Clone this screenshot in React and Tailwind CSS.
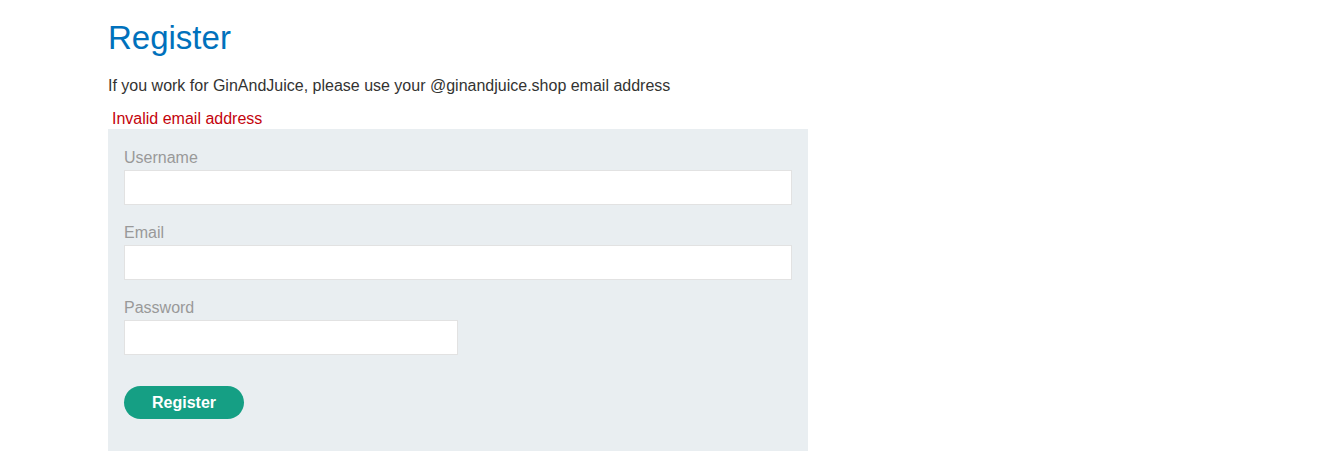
import React from 'react';

export default function App() {
  return (
    <div className="min-h-screen bg-white font-['Liberation_Sans',Arial,sans-serif] text-[#333332]">
      <div className="ml-[108px] w-[700px]">
        <h1 className="pt-[18px] text-[33px] leading-[40px] text-[#0071bc]">Register</h1>
        <p className="mt-[16px] text-[16px] leading-[24px]">
          If you work for GinAndJuice, please use your @ginandjuice.shop email address
        </p>
        <p className="mt-[11px] pl-1 text-[16px] leading-[20px] text-[#c4030c]">Invalid email address</p>
        <form className="bg-[#e9eef1] px-4 pt-[17px] pb-10" onSubmit={(e) => e.preventDefault()}>
          <label className="block text-[16px] leading-[24px] text-[#999999]">Username</label>
          <input className="block h-[35px] w-full border border-[#e2e2e2] bg-white" />
          <label className="mt-4 block text-[16px] leading-[24px] text-[#999999]">Email</label>
          <input className="block h-[35px] w-full border border-[#e2e2e2] bg-white" />
          <label className="mt-4 block text-[16px] leading-[24px] text-[#999999]">Password</label>
          <input type="password" className="block h-[35px] w-[334px] border border-[#e2e2e2] bg-white" />
          <button className="mt-[31px] h-[33px] w-[120px] rounded-full bg-[#159f84] text-[16px] font-bold text-white">
            Register
          </button>
        </form>
      </div>
    </div>
  );
}
